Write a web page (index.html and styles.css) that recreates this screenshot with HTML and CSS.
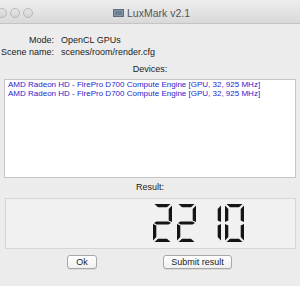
FILE: index.html
```html
<!DOCTYPE html>
<html lang="en">
<head>
    <meta charset="UTF-8">
    <title>LuxMark v2.1</title>
    <link rel="stylesheet" href="styles.css">
</head>
<body>
    <div class="window">
        <div class="titlebar">
            <div class="lights"><span></span><span></span><span></span></div>
            <div class="title">
                <svg class="app-icon" width="11" height="8" viewBox="0 0 11 8">
                    <rect x="0.5" y="0.5" width="10" height="7" fill="#8494a6" stroke="#5d6b7a"/>
                    <rect x="2" y="2" width="7" height="4" fill="#6f7f91"/>
                </svg>
                <span>LuxMark v2.1</span>
            </div>
        </div>
        <div class="content">
            <div class="info">
                <div class="row"><span class="label">Mode:</span><span>OpenCL GPUs</span></div>
                <div class="row"><span class="label">Scene name:</span><span>scenes/room/render.cfg</span></div>
            </div>
            <div class="caption">Devices:</div>
            <div class="devices">
                <div class="device">AMD Radeon HD - FirePro D700 Compute Engine [GPU, 32, 925 MHz]</div>
                <div class="device">AMD Radeon HD - FirePro D700 Compute Engine [GPU, 32, 925 MHz]</div>
            </div>
            <div class="caption result-caption">Result:</div>
            <div class="result">
                <svg class="lcd" width="290" height="50" viewBox="0 0 290 50">
                    <defs>
                        <path id="sa" d="M1.5,0 H17.5 L14,3.3 H5 Z"/>
                        <path id="sb" d="M19,1.5 V18 L15.7,16.5 V5 Z"/>
                        <path id="sc" d="M19,20 V36.5 L15.7,33 V21.5 Z"/>
                        <path id="sd" d="M1.5,38 L5,34.7 H14 L17.5,38 Z"/>
                        <path id="se" d="M0,20 L3.3,21.5 V33 L0,36.5 Z"/>
                        <path id="sf" d="M0,1.5 L3.3,5 V16.5 L0,18 Z"/>
                        <path id="sg" d="M1,19 L3.5,17.4 H15.5 L18,19 L15.5,20.6 H3.5 Z"/>
                        <g id="d2"><use href="#sa"/><use href="#sb"/><use href="#sg"/><use href="#se"/><use href="#sd"/></g>
                        <g id="d1"><use href="#sb"/><use href="#sc"/></g>
                        <g id="d0"><use href="#sa"/><use href="#sb"/><use href="#sc"/><use href="#sd"/><use href="#se"/><use href="#sf"/></g>
                    </defs>
                    <g fill="#151515">
                        <use href="#d2" x="147" y="5"/>
                        <use href="#d2" x="171" y="5"/>
                        <use href="#d1" x="196" y="5"/>
                        <use href="#d0" x="219" y="5"/>
                    </g>
                </svg>
            </div>
            <div class="buttons">
                <button class="btn btn-ok">Ok</button>
                <button class="btn btn-submit">Submit result</button>
            </div>
        </div>
    </div>
</body>
</html>
```

FILE: styles.css
```css
body {
  margin: 0;
  background-color: #fff;
  font-family: 'Liberation Sans', Arial, sans-serif;
  font-size: 9px;
  color: #222;
}
.window {
  width: 300px;
  height: 286px;
  background-color: #ececec;
  box-shadow: 0 2px 5px rgba(0, 0, 0, 0.35);
  overflow: hidden;
}
.titlebar {
  height: 23px;
  border-bottom: 1px solid #c4c4c4;
  background: linear-gradient(#eeeeee, #d9d9d9);
  display: flex;
  align-items: center;
  position: relative;
}
.lights {
  display: flex;
  gap: 3px;
  margin-left: -3px;
  padding-top: 2px;
}
.lights span {
  width: 8px;
  height: 8px;
  border-radius: 50%;
  border: 1px solid #b8b8b8;
  background: linear-gradient(#e6e6e6, #d4d4d4);
}
.title {
  position: absolute;
  left: 113px;
  top: 0;
  height: 23px;
  display: flex;
  align-items: center;
  gap: 3px;
  font-size: 10.5px;
  color: #555;
  padding-top: 2px;
  box-sizing: border-box;
}
.content {
  padding: 10px 4px 0 4px;
}
.info {
  margin-left: -3px;
}
.info .row {
  display: flex;
  height: 12px;
  line-height: 12px;
  white-space: nowrap;
}
.label {
  width: 53px;
  text-align: right;
  margin-right: 7px;
  flex-shrink: 0;
}
.caption {
  text-align: center;
  height: 12px;
  line-height: 12px;
  margin-top: 5px;
}
.devices {
  margin-top: 4px;
  border: 1px solid #c6c6c6;
  background-color: #fff;
  padding: 0 3px;
  box-sizing: border-box;
  height: 99px;
}
.device {
  color: #2626cc;
  font-size: 8px;
  line-height: 9px;
  white-space: nowrap;
}
.result-caption {
  margin-top: 3px;
}
.result {
  margin: 5px 0 0 1px;
  height: 51px;
  border: 1px solid #d6d6d6;
  background-color: #f1f1f1;
  box-sizing: border-box;
}
.lcd {
  display: block;
}
.buttons {
  display: flex;
  margin-top: 6px;
  padding-left: 63px;
}
.btn {
  height: 14px;
  padding: 0;
  border: 1px solid #a8a8a8;
  border-radius: 3px;
  background: linear-gradient(#ffffff, #f0f0f0);
  box-shadow: 0 1px 0 rgba(0, 0, 0, 0.08);
  font-family: 'Liberation Sans', Arial, sans-serif;
  font-size: 9px;
  line-height: 12px;
  color: #222;
}
.btn-ok {
  width: 30px;
}
.btn-submit {
  width: 69px;
  margin-left: 66px;
}
```
